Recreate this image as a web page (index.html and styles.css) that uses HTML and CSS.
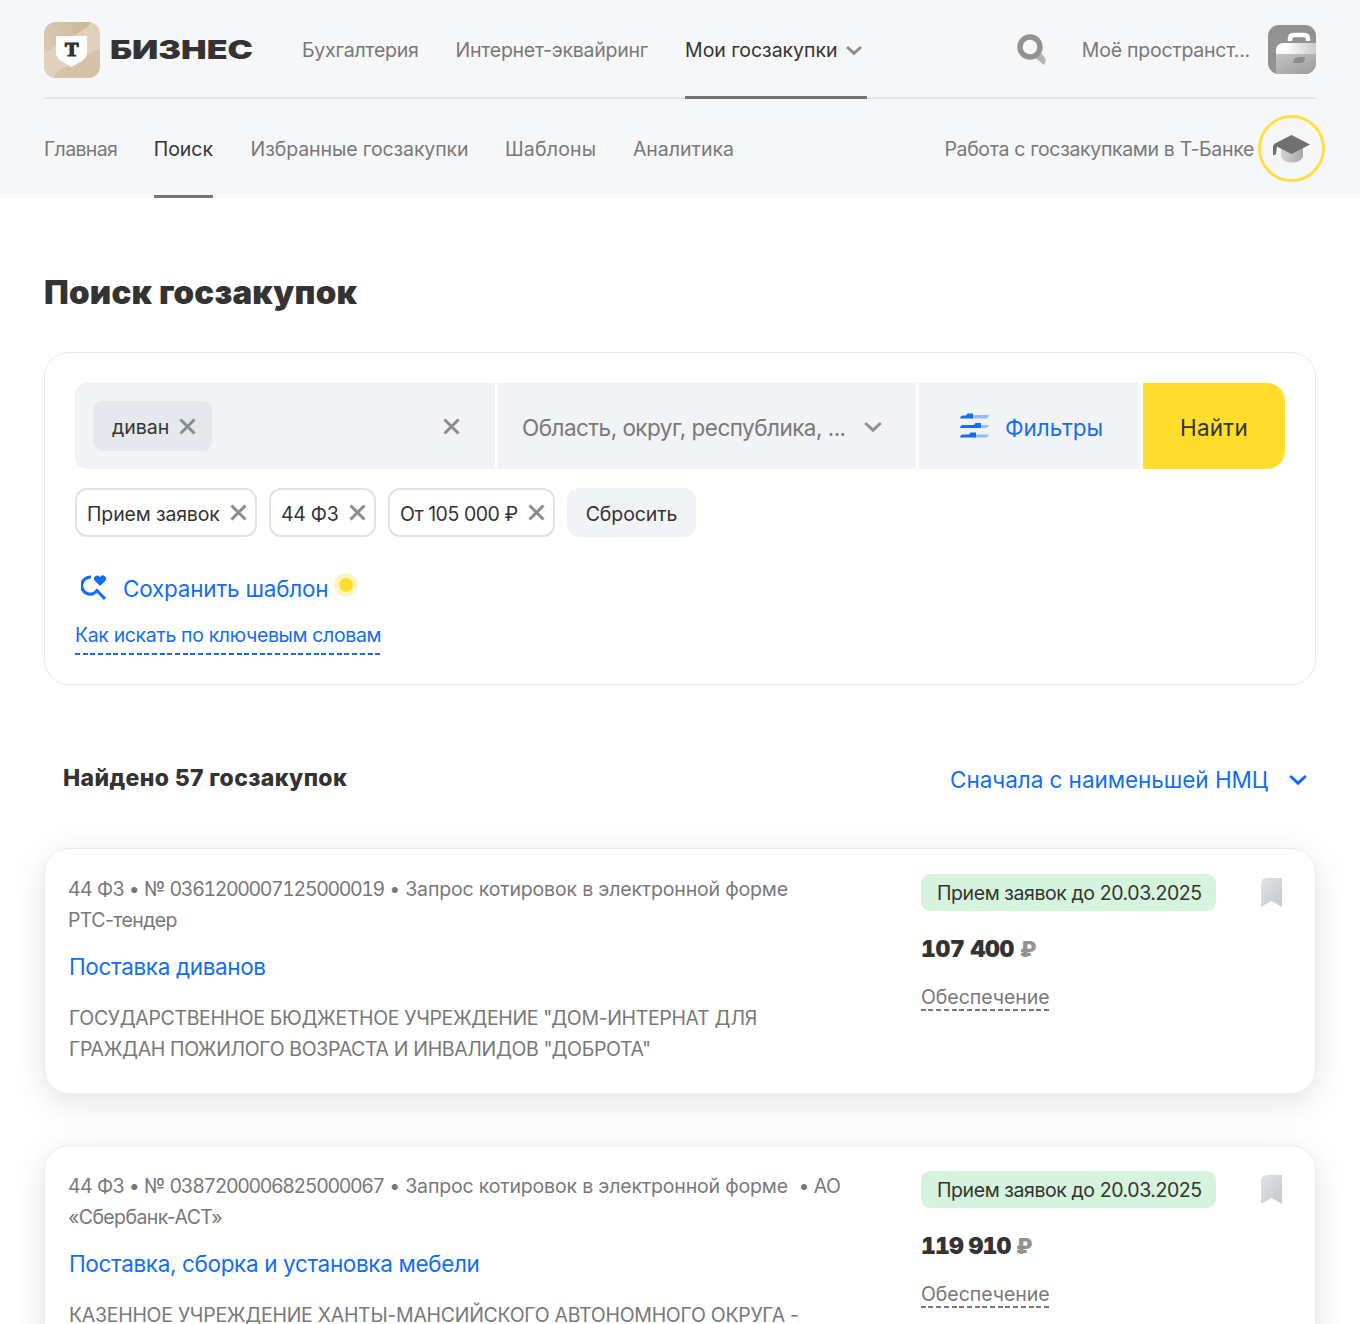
FILE: index.html
```html
<!DOCTYPE html>
<html lang="ru">
<head>
    <meta charset="UTF-8">
    <meta name="viewport" content="width=device-width, initial-scale=1.0">
    <title>Поиск госзакупок</title>
    <link rel="stylesheet" href="styles.css">
</head>
<body>
    <svg class="sprite" width="0" height="0">
        <defs>
            <linearGradient id="bookmark-fill" x1="0" y1="0" x2="1" y2="1">
                <stop offset="0" stop-color="#e1e2e4"/>
                <stop offset="1" stop-color="#c5c9cc"/>
            </linearGradient>
        </defs>
        <symbol id="cross" viewBox="0 0 17 17">
            <path d="M1.5 1.5l14 14M15.5 1.5l-14 14" fill="none" stroke="currentColor" stroke-width="3"/>
        </symbol>
        <symbol id="chevron" viewBox="0 0 18 12">
            <path d="M1.2 2L9 9.2 16.8 2" fill="none" stroke="currentColor" stroke-width="3"/>
        </symbol>
        <symbol id="bookmark" viewBox="0 0 21 29">
            <path d="M0 29V6Q0 0 6 0H21V29L10.500 23Z" fill="url(#bookmark-fill)"/>
        </symbol>
    </svg>

    <header class="header">
        <div class="topbar">
            <a class="logo" href="#">
                <svg width="209" height="56" viewBox="0 0 209 56">
                    <defs>
                        <linearGradient id="logo-a" x1="0" y1="0" x2="1" y2="1">
                            <stop offset="0" stop-color="#dccbb3"/>
                            <stop offset="0.5" stop-color="#dfd0ba"/>
                            <stop offset="1" stop-color="#d3bfa2"/>
                        </linearGradient>
                        <linearGradient id="logo-b" x1="0" y1="0" x2="1" y2="0">
                            <stop offset="0" stop-color="#dac9b0"/>
                            <stop offset="1" stop-color="#ccb696"/>
                        </linearGradient>
                        <clipPath id="logo-clip"><rect width="56" height="56" rx="12"/></clipPath>
                    </defs>
                    <g clip-path="url(#logo-clip)">
                        <rect width="56" height="56" fill="url(#logo-a)"/>
                        <path d="M0 0H46Q46 4 41 7L0 31Z" fill="url(#logo-b)"/>
                        <path d="M56 26L16 48Q11 51 10 56H56Z" fill="#d5c3a9"/>
                        <path d="M0 31L41 7Q46 4 46 0H56V26L16 48Q11 51 10 56H0Z" fill="#dfd1bc"/>
                    </g>
                    <path d="M12 14H43V30Q43 36 38 39L27.500 45 17 39Q12 36 12 30Z" fill="#fff"/>
                    <text class="logo-t" x="27.700" y="34" text-anchor="middle" textLength="13.500" lengthAdjust="spacingAndGlyphs">Т</text>
                    <text class="logo-name" x="66" y="37" textLength="143" lengthAdjust="spacingAndGlyphs">БИЗНЕС</text>
                </svg>
            </a>
            <nav class="main-nav">
                <a href="#">Бухгалтерия</a>
                <a href="#">Интернет-эквайринг</a>
                <a class="active" href="#">Мои госзакупки <svg class="nav-chevron"><use href="#chevron"/></svg></a>
            </nav>
            <button class="search-button">
                <svg width="30" height="31" viewBox="0 0 30 31">
                    <path d="M20 22L24.500 19.500 28 24Q29.500 27 27 31L18.500 24Z" fill="#b5b5b5"/>
                    <circle cx="13" cy="13" r="10" fill="none" stroke="#929292" stroke-width="5.400"/>
                </svg>
            </button>
            <a class="space" href="#">
                <span>Моё пространст...</span>
                <svg width="48" height="49" viewBox="0 0 48 49">
                    <defs>
                        <linearGradient id="case-top" x1="0" y1="0" x2="1" y2="0">
                            <stop offset="0.2" stop-color="#fff"/>
                            <stop offset="1" stop-color="#c9c9c9"/>
                        </linearGradient>
                        <linearGradient id="case-body" x1="0" y1="0" x2="1" y2="1">
                            <stop offset="0" stop-color="#c4c4c4"/>
                            <stop offset="1" stop-color="#9b9b9b"/>
                        </linearGradient>
                        <clipPath id="case-clip"><rect width="48" height="49" rx="11"/></clipPath>
                    </defs>
                    <g clip-path="url(#case-clip)">
                        <rect width="49" height="49" fill="#929292"/>
                        <path d="M22 16V14Q22 10 26 10H36Q40 10 40 14V16" fill="none" stroke="#fff" stroke-width="4.500"/>
                        <path d="M8 29V26Q8 18 16 18H49V29Z" fill="url(#case-top)"/>
                        <path d="M8 29H49V49H8Z" fill="url(#case-body)"/>
                        <path d="M25 38Q25 32 31 32H37Q37 38 32 38Z" fill="#8c8c8c"/>
                    </g>
                </svg>
            </a>
        </div>
        <div class="subbar">
            <nav class="sub-nav">
                <a href="#">Главная</a>
                <a class="active" href="#">Поиск</a>
                <a href="#">Избранные госзакупки</a>
                <a href="#">Шаблоны</a>
                <a href="#">Аналитика</a>
            </nav>
            <a class="academy" href="#">
                <span>Работа с госзакупками в Т-Банке</span>
                <span class="academy-icon">
                    <svg width="37" height="28" viewBox="0 0 37 28">
                        <defs>
                            <linearGradient id="cap-fill" x1="0" y1="0" x2="1" y2="0">
                                <stop offset="0" stop-color="#d2d2d2"/>
                                <stop offset="1" stop-color="#a9a9a9"/>
                            </linearGradient>
                        </defs>
                        <path d="M8 12H30V22Q27 27.500 19 27.500T8 22Z" fill="url(#cap-fill)"/>
                        <path d="M18.500 0L37 9.500 18.500 19 4 11.500 3 19 0 20.500V12Q0 9.500 2 8.500Z" fill="#707070"/>
                    </svg>
                </span>
            </a>
        </div>
    </header>

    <main class="content">
        <h1>Поиск госзакупок</h1>

        <section class="search-card">
            <div class="search-row">
                <div class="field field-words">
                    <span class="tag"><span>диван</span> <svg class="cross"><use href="#cross"/></svg></span>
                    <svg class="cross"><use href="#cross"/></svg>
                </div>
                <div class="field field-region">
                    <span>Область, округ, республика, ...</span>
                    <svg class="chevron"><use href="#chevron"/></svg>
                </div>
                <button class="field field-filters">
                    <svg width="29" height="25" viewBox="0 0 29 25">
                        <path d="M10 2H29Q28 5.500 26 5.500H10ZM18 12H29Q28 15 26 15H18ZM14 21.500H29Q28 24.500 26 24.500H14Z" fill="#94bcfa"/>
                        <path d="M0 5.500Q.5 2.500 3 2.500H6L7.500 0.500H13V5.500ZM0 15Q.5 12 3 12H14L15.500 10H21V15ZM0 24.500Q.5 21.500 3 21.500H9L10.500 19.500H16V24.500Z" fill="#126df7"/>
                    </svg>
                    <span>Фильтры</span>
                </button>
                <button class="field field-submit">Найти</button>
            </div>
            <div class="chips">
                <span class="chip"><span>Прием заявок</span> <svg class="cross"><use href="#cross"/></svg></span>
                <span class="chip chip-law"><span>44 ФЗ</span> <svg class="cross"><use href="#cross"/></svg></span>
                <span class="chip chip-price"><span>От 105 000 ₽</span> <svg class="cross"><use href="#cross"/></svg></span>
                <button class="reset">Сбросить</button>
            </div>
            <a class="save" href="#">
                <svg width="26" height="26" viewBox="0 0 26 26">
                    <path d="M10 2.200A8.500 8.500 0 1 0 16.500 15M15 14.500L24 24" fill="none" stroke="#126df7" stroke-width="3.200"/>
                    <path d="M19 11L13.600 5.600A3.200 3.200 0 0 1 19 2 3.200 3.200 0 0 1 24.600 5.600Z" fill="#126df7"/>
                </svg>
                <span>Сохранить шаблон</span>
                <i class="hint-dot"></i>
            </a>
            <a class="help-link" href="#">Как искать по ключевым словам</a>
        </section>

        <div class="results-head">
            <h2>Найдено 57 госзакупок</h2>
            <button class="sort">Сначала с наименьшей НМЦ <svg class="chevron"><use href="#chevron"/></svg></button>
        </div>

        <article class="tender">
            <div class="tender-info">
                <p class="meta"><span class="law">44 ФЗ • № </span><span class="number">0361200007125000019</span> • Запрос котировок в электронной форме <span class="platform">РТС-тендер</span></p>
                <a class="tender-title" href="#">Поставка диванов</a>
                <p class="customer">ГОСУДАРСТВЕННОЕ БЮДЖЕТНОЕ УЧРЕЖДЕНИЕ "ДОМ-ИНТЕРНАТ ДЛЯ ГРАЖДАН ПОЖИЛОГО ВОЗРАСТА И ИНВАЛИДОВ "ДОБРОТА"</p>
            </div>
            <div class="tender-side">
                <span class="status">Прием заявок до 20.03.2025</span>
                <div class="price">107 400 <span>₽</span></div>
                <a class="deposit" href="#">Обеспечение</a>
            </div>
            <svg class="bookmark"><use href="#bookmark"/></svg>
        </article>

        <article class="tender">
            <div class="tender-info">
                <p class="meta"><span class="law">44 ФЗ • № </span><span class="number">0387200006825000067</span> • Запрос котировок в электронной форме&nbsp; <span class="law">• АО</span> <span class="platform">«Сбербанк-АСТ»</span></p>
                <a class="tender-title" href="#">Поставка, сборка и установка мебели</a>
                <p class="customer customer-wide">КАЗЕННОЕ УЧРЕЖДЕНИЕ ХАНТЫ-МАНСИЙСКОГО АВТОНОМНОГО ОКРУГА -</p>
            </div>
            <div class="tender-side">
                <span class="status">Прием заявок до 20.03.2025</span>
                <div class="price price-narrow">119 910 <span>₽</span></div>
                <a class="deposit" href="#">Обеспечение</a>
            </div>
            <svg class="bookmark"><use href="#bookmark"/></svg>
        </article>
    </main>
</body>
</html>
```
FILE: styles.css
```css
* {
    box-sizing: border-box;
}
body {
    margin: 0;
    height: 1324px;
    overflow: hidden;
    background: #fff;
    color: #333;
    font-family: Inter, "Liberation Sans", sans-serif;
    font-size: 19.5px;
}
a {
    color: inherit;
    text-decoration: none;
}
button {
    border: none;
    padding: 0;
    background: none;
    color: inherit;
    font: inherit;
    letter-spacing: inherit;
    cursor: pointer;
}
h1, h2, p {
    margin: 0;
}
svg {
    display: block;
    flex: none;
}
.sprite {
    position: absolute;
}
.cross {
    width: 17px;
    height: 17px;
    color: #8c8c8c;
}
.chevron {
    width: 18px;
    height: 12px;
}

/* header */
.header {
    height: 198px;
    padding: 0 44px;
    background: #f6f7f9;
    color: #787878;
}
.topbar {
    display: flex;
    align-items: center;
    height: 99px;
    box-shadow: inset 0 -2px #e5e7ee;
}
.logo {
    margin-right: 49px;
}
.logo-t {
    font: bold 18px "Liberation Serif", serif;
    fill: #333;
    stroke: #333;
    stroke-width: 1.2px;
}
.logo-name {
    font: 900 26px Inter, sans-serif;
    fill: #333;
}
.main-nav, .sub-nav {
    display: flex;
    height: 99px;
}
.main-nav {
    gap: 37px;
    flex: 1;
    letter-spacing: -0.25px;
}
.main-nav a, .sub-nav a {
    display: flex;
    align-items: center;
}
.main-nav .active, .sub-nav .active {
    color: #333;
    box-shadow: inset 0 -3px #757575;
}
.main-nav .active {
    letter-spacing: -0.05px;
}
.nav-chevron {
    width: 16px;
    height: 11px;
    margin: 2px 5px 0 9px;
    color: #8c8c8c;
}
.search-button {
    margin-right: 35px;
}
.space {
    display: flex;
    align-items: center;
    gap: 18px;
    letter-spacing: -0.24px;
}
.subbar {
    display: flex;
    justify-content: space-between;
    height: 99px;
}
.sub-nav {
    gap: 36.5px;
}
.sub-nav a:nth-child(1) {
    letter-spacing: -0.66px;
}
.sub-nav a:nth-child(3) {
    letter-spacing: -0.1px;
    padding-left: 1px;
}
.sub-nav a:nth-child(4) {
    letter-spacing: 0.2px;
}
.academy {
    display: flex;
    align-items: center;
    gap: 4px;
    margin-right: -9px;
    letter-spacing: -0.34px;
}
.academy-icon {
    display: flex;
    align-items: center;
    justify-content: center;
    width: 67px;
    height: 67px;
    border: 3px solid #ffe04a;
    border-radius: 50%;
}

/* search form */
.content {
    padding: 72px 44px 0;
}
h1 {
    font-size: 33px;
    font-weight: 900;
    line-height: 44px;
    letter-spacing: 0.2px;
}
.search-card {
    margin-top: 38px;
    padding: 30px;
    height: 333px;
    border: 1px solid #e7eaf0;
    border-radius: 25px;
}
.search-row {
    display: grid;
    grid-template-columns: 420px 418px 221px 142px;
    gap: 3px;
    height: 86px;
    font-size: 22.5px;
}
.field {
    display: flex;
    align-items: center;
    background: #f2f3f7;
}
.field-words {
    justify-content: space-between;
    padding: 0 35px 0 18px;
    border-radius: 12px 0 0 12px;
}
.tag {
    display: flex;
    align-items: center;
    gap: 10px;
    height: 50px;
    padding: 0 16px 0 19px;
    border-radius: 9px;
    background: #e5e8ed;
    font-size: 19.5px;
}
.tag span, .chip span {
    padding-top: 2px;
}
.field-region {
    justify-content: space-between;
    padding: 2px 34px 0 24px;
    color: #787878;
    letter-spacing: -0.53px;
}
.field-region .chevron {
    color: #929292;
}
.field-filters {
    justify-content: center;
    gap: 16px;
    padding: 0 0 2px 4px;
    color: #126df7;
}
.field-filters span {
    padding-top: 4px;
}
.field-submit {
    justify-content: center;
    padding-top: 2px;
    border-radius: 0 18px 18px 0;
    background: #ffdd2d;
    letter-spacing: 0.2px;
}
.chips {
    display: flex;
    gap: 12px;
    margin-top: 19px;
}
.chip {
    display: flex;
    align-items: center;
    justify-content: space-between;
    width: 182px;
    height: 49px;
    padding: 0 8px 0 10px;
    border: 2px solid #e2e2e2;
    border-radius: 12px;
    letter-spacing: -0.15px;
}
.chip-law {
    width: 107px;
    letter-spacing: -0.3px;
}
.chip-price {
    width: 167px;
    letter-spacing: -0.45px;
}
.reset {
    width: 129px;
    padding-top: 2px;
    border-radius: 12px;
    background: #f2f3f7;
    letter-spacing: -0.1px;
}
.save {
    display: flex;
    align-items: center;
    height: 32px;
    margin-top: 35px;
    padding-left: 6px;
    color: #126df7;
    font-size: 22.5px;
    letter-spacing: -0.22px;
}
.save span {
    margin: 0 6px 0 16px;
}
.hint-dot {
    width: 24px;
    height: 24px;
    margin-bottom: 6px;
    border: 5.5px solid #fff4bf;
    border-radius: 50%;
    background: #ffdd2d;
}
.help-link, .deposit {
    display: inline-block;
    background: repeating-linear-gradient(90deg, currentColor 0 5px, transparent 5px 7.7px) bottom / 100% 2px no-repeat;
}
.help-link {
    margin-top: 18px;
    padding-bottom: 7px;
    line-height: 26px;
    color: #126df7;
    letter-spacing: -0.36px;
}

/* results */
.results-head {
    display: flex;
    justify-content: space-between;
    align-items: center;
    height: 32px;
    margin: 77px 9px 54px 19px;
}
h2 {
    font-size: 23px;
    font-weight: 800;
    line-height: 28px;
    letter-spacing: 0.36px;
}
.sort {
    display: flex;
    align-items: center;
    gap: 21px;
    padding-top: 3px;
    color: #126df7;
    font-size: 22.5px;
    letter-spacing: -0.05px;
}
.tender {
    display: grid;
    grid-template-columns: 853px 295px 21px;
    height: 246px;
    margin-bottom: 50.5px;
    padding: 24px 33px 0 23px;
    border: 1px solid #e9ecf2;
    border-radius: 25px;
    background: #fff;
    box-shadow: 0 8px 36px rgba(0, 0, 0, 0.11);
}
.tender-info {
    padding: 1px 70px 0 0;
}
.meta, .customer {
    line-height: 31px;
    color: #787878;
}
.meta {
    letter-spacing: -0.17px;
}
.law {
    letter-spacing: -0.6px;
}
.number {
    font-variant-numeric: tabular-nums;
    letter-spacing: -1.37px;
}
.platform {
    white-space: nowrap;
    letter-spacing: -0.6px;
}
.customer {
    margin: 21px 0 0 1px;
    letter-spacing: -0.35px;
}
.customer-wide {
    letter-spacing: -0.28px;
}
.tender-title {
    display: block;
    margin: 16px 0 0 1px;
    line-height: 30px;
    color: #126df7;
    font-size: 22.5px;
    letter-spacing: -0.35px;
}
.tender-side {
    padding-top: 1px;
}
.status {
    display: block;
    height: 37px;
    padding: 1px 0 0 16px;
    border-radius: 9px;
    background: #d6f3dd;
    line-height: 37px;
    letter-spacing: -0.42px;
}
.price {
    margin-top: 23px;
    font-size: 23px;
    font-weight: 900;
    line-height: 30px;
    font-variant-numeric: tabular-nums;
    letter-spacing: -0.3px;
}
.price-narrow {
    letter-spacing: -0.8px;
}
.price span {
    font-size: 21px;
    color: #929292;
}
.deposit {
    margin-top: 20px;
    padding-bottom: 1px;
    line-height: 25px;
    color: #787878;
    letter-spacing: -0.05px;
}
.bookmark {
    width: 21px;
    height: 29px;
    margin: 5px 0 0 45px;
}
```
